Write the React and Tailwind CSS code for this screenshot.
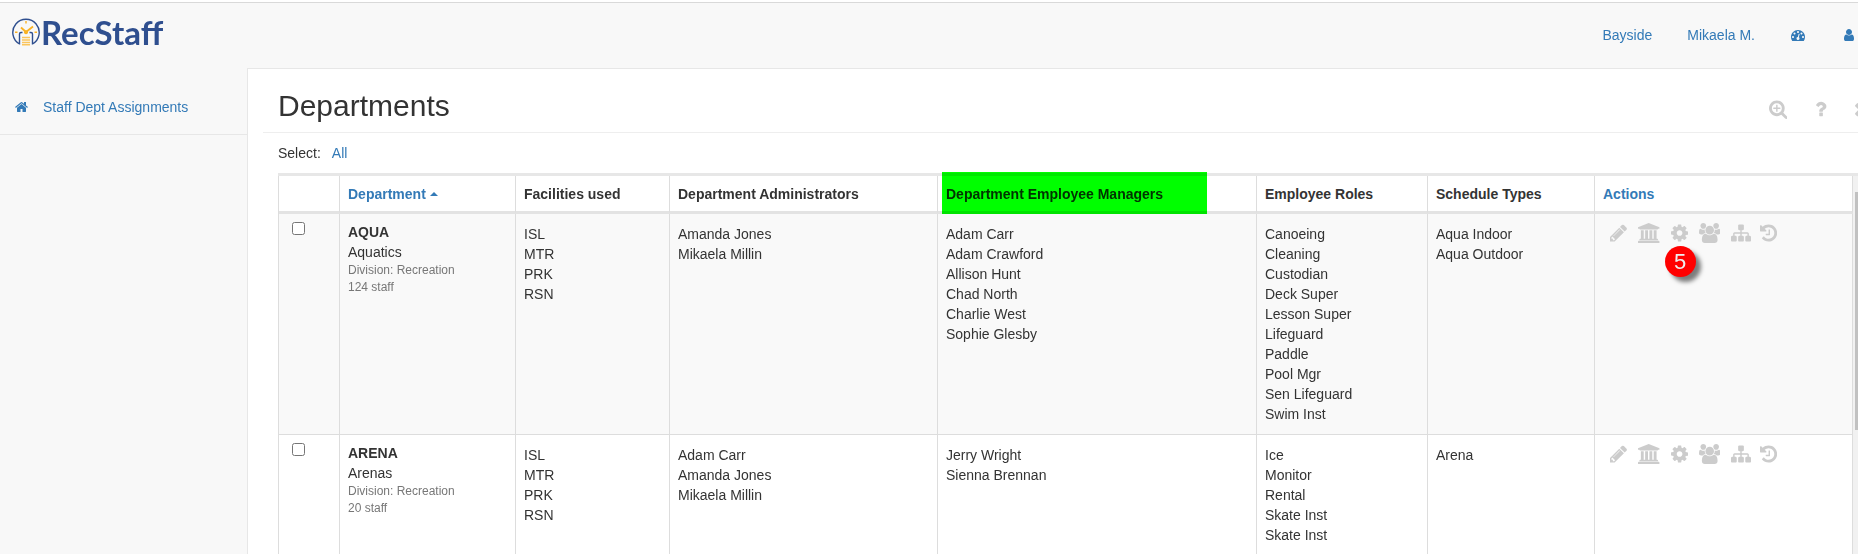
import React, { useState } from "react";

const ICONS = {
  home: {
    box: "64 0 1664 1792",
    d: "M1472 992v480q0 26-19 45t-45 19h-384v-384h-256v384h-384q-26 0-45-19t-19-45v-480q0-1 .5-3t.5-3l575-474 575 474q1 2 1 6zm223-69l-62 74q-8 9-21 11h-3q-13 0-21-7l-692-577-692 577q-12 8-24 7-13-2-21-11l-62-74q-8-10-7-23.5t11-21.5l719-599q32-26 76-26t76 26l244 204v-195q0-14 9-23t23-9h192q14 0 23 9t9 23v408l219 182q10 8 11 21.5t-7 23.5z",
  },
  dashboard: {
    box: "0 0 1792 1792",
    d: "M384 1152q0-53-37.5-90.5t-90.5-37.5-90.5 37.5-37.5 90.5 37.5 90.5 90.5 37.5 90.5-37.5 37.5-90.5zm192-448q0-53-37.5-90.5t-90.5-37.5-90.5 37.5-37.5 90.5 37.5 90.5 90.5 37.5 90.5-37.5 37.5-90.5zm428 481l101-382q6-26-7.5-48.5t-38.5-29.5-48 6.5-30 39.5l-101 382q-60 5-107 43.5t-63 98.5q-20 77 20 146t117 89 146-20 89-117q16-60-6-117t-72-91zm660-33q0-53-37.5-90.5t-90.5-37.5-90.5 37.5-37.5 90.5 37.5 90.5 90.5 37.5 90.5-37.5 37.5-90.5zm-640-640q0-53-37.5-90.5t-90.5-37.5-90.5 37.5-37.5 90.5 37.5 90.5 90.5 37.5 90.5-37.5 37.5-90.5zm448 192q0-53-37.5-90.5t-90.5-37.5-90.5 37.5-37.5 90.5 37.5 90.5 90.5 37.5 90.5-37.5 37.5-90.5zm320 448q0 261-141 483-19 29-54 29h-1402q-35 0-54-29-141-221-141-483 0-182 71-348t191-286 286-191 348-71 348 71 286 191 191 286 71 348z",
  },
  user: {
    box: "256 0 1280 1792",
    d: "M1536 1399q0 109-62.5 187t-150.5 78h-854q-88 0-150.5-78t-62.5-187q0-85 8.5-160.5t31.5-152 58.5-131 94-89 134.5-34.5q131 128 313 128t313-128q76 0 134.5 34.5t94 89 58.5 131 31.5 152 8.5 160.5zm-256-887q0 159-112.5 271.5t-271.5 112.5-271.5-112.5-112.5-271.5 112.5-271.5 271.5-112.5 271.5 112.5 112.5 271.5z",
  },
  zoomIn: {
    box: "64 0 1664 1792",
    d: "M1088 800v64q0 13-9.5 22.5t-22.5 9.5h-224v224q0 13-9.5 22.5t-22.5 9.5h-64q-13 0-22.5-9.5t-9.5-22.5v-224h-224q-13 0-22.5-9.5t-9.5-22.5v-64q0-13 9.5-22.5t22.5-9.5h224v-224q0-13 9.5-22.5t22.5-9.5h64q13 0 22.5 9.5t9.5 22.5v224h224q13 0 22.5 9.5t9.5 22.5zm128 32q0-185-131.5-316.5t-316.5-131.5-316.5 131.5-131.5 316.5 131.5 316.5 316.5 131.5 316.5-131.5 131.5-316.5zm512 832q0 53-37.5 90.5t-90.5 37.5q-54 0-90-38l-343-342q-179 124-399 124-143 0-273.5-55.5t-225-150-150-225-55.5-273.5 55.5-273.5 150-225 225-150 273.5-55.5 273.5 55.5 225 150 150 225 55.5 273.5q0 220-124 399l343 343q37 37 37 90z",
  },
  help: {
    box: "384 0 1024 1792",
    d: "M1088 1256v240q0 16-12 28t-28 12h-240q-16 0-28-12t-12-28v-240q0-16 12-28t28-12h240q16 0 28 12t12 28zm316-600q0 54-15.5 101t-35 76.5-55 59.5-57.5 43.5-61 35.5q-41 23-68.5 65t-27.5 67q0 17-12 32.5t-28 15.5h-240q-15 0-25.5-18.5t-10.5-37.5v-45q0-83 65-156.5t143-108.5q59-27 84-56t25-76q0-42-46.5-74t-107.5-32q-65 0-108 29-35 25-107 115-13 16-31 16-12 0-25-8l-164-125q-13-10-15.5-25t5.5-28q160-266 464-266 80 0 161 31t146 83 106 127.5 41 158.5z",
  },
  close: {
    box: "296 0 1200 1792",
    d: "M1490 1322q0 40-28 68l-136 136q-28 28-68 28t-68-28l-294-294-294 294q-28 28-68 28t-68-28l-136-136q-28-28-28-68t28-68l294-294-294-294q-28-28-28-68t28-68l136-136q28-28 68-28t68 28l294 294 294-294q28-28 68-28t68 28l136 136q28 28 28 68t-28 68l-294 294 294 294q28 28 28 68z",
  },
  pencil: {
    box: "128 0 1536 1792",
    d: "M491 1536l91-91-235-235-91 91v107h128v128h107zm523-928q0-22-22-22-10 0-17 7l-542 542q-7 7-7 17 0 22 22 22 10 0 17-7l542-542q7-7 7-17zm-54-192l416 416-832 832h-416v-416zm683 96q0 53-37 90l-166 166-416-416 166-165q36-38 90-38 53 0 91 38l235 234q37 39 37 91z",
  },
  university: {
    box: "0 0 1920 1792",
    d: "M960 0l960 384v128h-128q0 26-20.5 45t-48.5 19h-1526q-28 0-48.5-19t-20.5-45h-128v-128zm-704 640h256v768h128v-768h256v768h128v-768h256v768h128v-768h256v768h59q28 0 48.5 19t20.5 45v64h-1664v-64q0-26 20.5-45t48.5-19h59v-768zm1595 960q28 0 48.5 19t20.5 45v128h-1920v-128q0-26 20.5-45t48.5-19h1782z",
  },
  cog: {
    box: "128 0 1536 1792",
    d: "M1152 896q0-106-75-181t-181-75-181 75-75 181 75 181 181 75 181-75 75-181zm512-109v222q0 12-8 23t-20 13l-185 28q-19 54-39 91 35 50 107 138 10 12 10 25t-9 23q-27 37-99 108t-94 71q-12 0-26-9l-138-108q-44 23-91 38-16 136-29 186-7 28-36 28h-222q-14 0-24.5-8.5t-11.5-21.5l-28-184q-49-16-90-37l-141 107q-10 9-25 9-14 0-25-11-126-114-165-168-7-10-7-23 0-12 8-23 15-21 51-66.5t54-70.5q-27-50-41-99l-183-27q-13-2-21-12.5t-8-23.5v-222q0-12 8-23t19-13l186-28q14-46 39-92-40-57-107-138-10-12-10-24 0-10 9-23 26-36 98.5-107.5t94.5-71.5q13 0 26 10l138 107q44-23 91-38 16-136 29-186 7-28 36-28h222q14 0 24.5 8.5t11.5 21.5l28 184q49 16 90 37l142-107q9-9 24-9 13 0 25 10 129 119 165 170 7 8 7 22 0 12-8 23-15 21-51 66.5t-54 70.5q26 50 41 98l183 28q13 2 21 12.5t8 23.5z",
  },
  users: {
    box: "0 0 1920 1792",
    d: "M593 896q-162 5-265 128h-134q-82 0-138-40.5t-56-118.5q0-353 124-353 6 0 43.5 21t97.5 42.5 119 21.5q67 0 133-23-5 37-5 66 0 139 81 256zm1071 637q0 120-73 189.5t-194 69.5h-874q-121 0-194-69.5t-73-189.5q0-53 3.5-103.5t14-109 26.5-108.5 43-97.5 62-81 85.5-53.5 111.5-20q10 0 43 21.5t73 48 107 48 135 21.5 135-21.5 107-48 73-48 43-21.5q61 0 111.5 20t85.5 53.5 62 81 43 97.5 26.5 108.5 14 109 3.5 103.5zm-1024-1277q0 106-75 181t-181 75-181-75-75-181 75-181 181-75 181 75 75 181zm704 384q0 159-112.5 271.5t-271.5 112.5-271.5-112.5-112.5-271.5 112.5-271.5 271.5-112.5 271.5 112.5 112.5 271.5zm576 225q0 78-56 118.5t-138 40.5h-134q-103-123-265-128 81-117 81-256 0-29-5-66 66 23 133 23 59 0 119-21.5t97.5-42.5 43.5-21q124 0 124 353zm-128-609q0 106-75 181t-181 75-181-75-75-181 75-181 181-75 181 75 75 181z",
  },
  sitemap: {
    box: "0 0 1792 1792",
    d: "M1792 1248v320q0 40-28 68t-68 28h-320q-40 0-68-28t-28-68v-320q0-40 28-68t68-28h96v-192h-512v192h96q40 0 68 28t28 68v320q0 40-28 68t-68 28h-320q-40 0-68-28t-28-68v-320q0-40 28-68t68-28h96v-192h-512v192h96q40 0 68 28t28 68v320q0 40-28 68t-68 28h-320q-40 0-68-28t-28-68v-320q0-40 28-68t68-28h96v-192q0-52 38-90t90-38h512v-192h-96q-40 0-68-28t-28-68v-320q0-40 28-68t68-28h320q40 0 68 28t28 68v320q0 40-28 68t-68 28h-96v192h512q52 0 90 38t38 90v192h96q40 0 68 28t28 68z",
  },
  history: {
    box: "128 0 1536 1792",
    d: "M1664 896q0 156-61 298t-164 245-245 164-298 61q-172 0-327-72.5t-264-204.5q-7-10-6.5-22.5t8.5-20.5l137-138q10-9 25-9 16 2 23 12 73 95 179 147t225 52q104 0 198.5-40.5t163.5-109.5 109.5-163.5 40.5-198.5-40.5-198.5-109.5-163.5-163.5-109.5-198.5-40.5q-98 0-188 35.5t-160 101.5l137 138q31 30 14 69-17 40-59 40h-448q-26 0-45-19t-19-45v-448q0-42 40-59 39-17 69 14l130 129q107-101 244.5-156.5t284.5-55.5q156 0 298 61t245 164 164 245 61 298zm-640-288v448q0 14-9 23t-23 9h-320q-14 0-23-9t-9-23v-64q0-14 9-23t23-9h224v-352q0-14 9-23t23-9h64q14 0 23 9t9 23z",
  },
};

const ACTIONS = [
  { icon: "pencil", label: "Edit" },
  { icon: "university", label: "Facilities", wide: true },
  { icon: "cog", label: "Settings" },
  { icon: "users", label: "Staff", wide: true },
  { icon: "sitemap", label: "Structure" },
  { icon: "history", label: "History" },
];

const DEPARTMENTS = [
  {
    code: "AQUA",
    name: "Aquatics",
    division: "Recreation",
    staff: 124,
    facilities: ["ISL", "MTR", "PRK", "RSN"],
    admins: ["Amanda Jones", "Mikaela Millin"],
    managers: [
      "Adam Carr",
      "Adam Crawford",
      "Allison Hunt",
      "Chad North",
      "Charlie West",
      "Sophie Glesby",
    ],
    roles: [
      "Canoeing",
      "Cleaning",
      "Custodian",
      "Deck Super",
      "Lesson Super",
      "Lifeguard",
      "Paddle",
      "Pool Mgr",
      "Sen Lifeguard",
      "Swim Inst",
    ],
    schedules: ["Aqua Indoor", "Aqua Outdoor"],
    step: 5,
  },
  {
    code: "ARENA",
    name: "Arenas",
    division: "Recreation",
    staff: 20,
    facilities: ["ISL", "MTR", "PRK", "RSN"],
    admins: ["Adam Carr", "Amanda Jones", "Mikaela Millin"],
    managers: ["Jerry Wright", "Sienna Brennan"],
    roles: ["Ice", "Monitor", "Rental", "Skate Inst", "Skate Inst"],
    schedules: ["Arena"],
  },
];

function Icon({ name, className }) {
  return (
    <svg viewBox={ICONS[name].box} className={className} fill="currentColor" aria-hidden="true">
      <path d={ICONS[name].d} />
    </svg>
  );
}

function Logo() {
  return (
    <a href="#home" className="flex items-center gap-px text-[#2f4f8f]">
      <svg viewBox="0 0 28 28" className="h-7 w-7" fill="none" aria-hidden="true">
        <path
          d="M7.5 26.5V16q0-1.5 1.5-1.5h1.5M20.5 26.5V16q0-1.5-1.5-1.5H17.5M7.5 26A13.2 13.2 0 1 1 20.5 26"
          stroke="#2f4f8f"
          strokeWidth="1.4"
        />
        <path d="M9 9.5l5 4.5 7-5.5" stroke="#f9b224" strokeWidth="1.8" />
        <circle cx="14" cy="14.3" r="2" fill="#f9b224" />
        <path d="M14 3v2.5M3 14.3h2.5M22.5 14.3H25" stroke="#f9b224" strokeWidth="1.4" />
        <path d="M10 19.5h8M10 22h8M10 24.5h8M10 26.7h8" stroke="#fbc55c" strokeWidth="1.5" />
      </svg>
      <span className="font-['Lato',sans-serif] text-[33px] leading-8 font-bold">RecStaff</span>
    </a>
  );
}

function TextList({ items }) {
  return (
    <td className="border-r border-b border-[#ddd] px-2 py-[10px] align-top">
      <ul>
        {items.map((item, i) => (
          <li key={i}>{item}</li>
        ))}
      </ul>
    </td>
  );
}

function HeaderCell({ children, className = "" }) {
  return (
    <th
      scope="col"
      className={`relative border-r border-b-[3px] border-r-[#ddd] border-b-[#e3e3e3] bg-white px-2 pt-2 pb-[7px] text-left font-bold ${className}`}
    >
      {children}
    </th>
  );
}

function DepartmentRow({ dept, checked, onToggle }) {
  return (
    <tr className="odd:bg-[#f9f9f9]">
      <td className="border-r border-b border-[#ddd] px-[13px] pt-2 align-top">
        <input
          type="checkbox"
          aria-label={`Select ${dept.code}`}
          checked={checked}
          onChange={onToggle}
          className="block h-[13px] w-[13px]"
        />
      </td>
      <td className="border-r border-b border-[#ddd] p-2 align-top">
        <div className="font-bold">{dept.code}</div>
        <div>{dept.name}</div>
        <div className="text-xs leading-[17px] text-[#777]">Division: {dept.division}</div>
        <div className="text-xs leading-[17px] text-[#777]">{dept.staff} staff</div>
      </td>
      <TextList items={dept.facilities} />
      <TextList items={dept.admins} />
      <TextList items={dept.managers} />
      <TextList items={dept.roles} />
      <TextList items={dept.schedules} />
      <td className="border-r border-b border-[#ddd] py-[9px] pl-[15px] align-top text-[#ccc]">
        <div className="flex gap-[9px]">
          {ACTIONS.map((action) => (
            <button
              key={action.icon}
              type="button"
              aria-label={action.label}
              className={action.wide ? "relative px-0.5" : "relative"}
            >
              <Icon name={action.icon} className="h-5" />
              {dept.step && action.icon === "cog" && (
                <span className="absolute top-[23px] -left-1.5 flex h-[31px] w-[31px] items-center justify-center rounded-full bg-[#f00] text-[22px] text-[#eee] shadow-[5px_5px_4px_rgba(0,0,0,0.5)]">
                  {dept.step}
                </span>
              )}
            </button>
          ))}
        </div>
      </td>
    </tr>
  );
}

export default function App() {
  const [selected, setSelected] = useState([]);

  const toggle = (code) => {
    setSelected(
      selected.includes(code) ? selected.filter((c) => c !== code) : [...selected, code]
    );
  };

  return (
    <div className="flex h-screen flex-col overflow-hidden bg-[#f8f8f8] font-['Liberation_Sans',Arial,sans-serif] text-sm text-[#333]">
      <div className="h-0.5 shrink-0 bg-white" />
      <header className="flex h-[66px] shrink-0 items-start justify-between border-t border-[#d9d9d9] pt-[13px] pr-px pl-3">
        <Logo />
        <nav className="flex items-center gap-[35px] pt-[9px] text-[#337ab7]">
          <a href="#site">Bayside</a>
          <a href="#profile">Mikaela M.</a>
          <a href="#dashboard" aria-label="Dashboard" className="flex w-4 justify-center">
            <Icon name="dashboard" className="h-3.5" />
          </a>
          <a href="#account" aria-label="Account" className="flex w-4 justify-center">
            <Icon name="user" className="h-3.5" />
          </a>
        </nav>
      </header>

      <div className="flex min-h-0 flex-1">
        <aside className="w-[247px] shrink-0">
          <a
            href="#assignments"
            className="flex items-center gap-[15px] border-b border-[#e7e7e7] pt-[29px] pb-[17px] pl-[15px] text-[#337ab7]"
          >
            <Icon name="home" className="h-3.5" />
            Staff Dept Assignments
          </a>
        </aside>

        <main className="flex min-w-0 flex-1 flex-col overflow-hidden border-t border-l border-[#e7e7e7] bg-white">
          <div className="ml-[15px] flex justify-between overflow-hidden border-b border-[#eee] pt-5 pb-2.5 pl-[15px]">
            <h1 className="text-[30px] leading-[33px]">Departments</h1>
            <div className="-mr-2.5 flex items-center gap-7 pt-1.5 text-[#ccc]">
              <button type="button" aria-label="Search">
                <Icon name="zoomIn" className="h-5" />
              </button>
              <button type="button" aria-label="Help">
                <Icon name="help" className="h-5" />
              </button>
              <button type="button" aria-label="Close">
                <Icon name="close" className="h-5" />
              </button>
            </div>
          </div>

          <div className="flex gap-[11px] py-2.5 pl-[30px]">
            <span>Select:</span>
            <a href="#all" className="text-[#337ab7]" onClick={() => setSelected(DEPARTMENTS.map((d) => d.code))}>
              All
            </a>
          </div>

          <div className="ml-[30px] flex min-h-0 flex-1 border-t-[3px] border-[#e7e7e7]">
            <div className="min-w-0 flex-1">
              <table className="w-full table-fixed border-separate border-spacing-0 border-l border-[#ddd]">
                <colgroup>
                  <col className="w-[61px]" />
                  <col className="w-[176px]" />
                  <col className="w-[154px]" />
                  <col className="w-[268px]" />
                  <col className="w-[319px]" />
                  <col className="w-[171px]" />
                  <col className="w-[167px]" />
                  <col />
                </colgroup>
                <thead>
                  <tr>
                    <HeaderCell />
                    <HeaderCell className="text-[#337ab7]">
                      <a href="#sort" className="flex items-center gap-1">
                        Department
                        <svg viewBox="0 0 8 4" className="h-1 w-2" fill="currentColor" aria-hidden="true">
                          <path d="M0 4L4 0l4 4z" />
                        </svg>
                      </a>
                    </HeaderCell>
                    <HeaderCell>Facilities used</HeaderCell>
                    <HeaderCell>Department Administrators</HeaderCell>
                    <HeaderCell>
                      Department Employee Managers
                      <span className="absolute -top-1 left-1 h-[42px] w-[265px] bg-[#0f0] mix-blend-multiply" />
                    </HeaderCell>
                    <HeaderCell>Employee Roles</HeaderCell>
                    <HeaderCell>Schedule Types</HeaderCell>
                    <HeaderCell className="text-[#337ab7]">Actions</HeaderCell>
                  </tr>
                </thead>
                <tbody>
                  {DEPARTMENTS.map((dept) => (
                    <DepartmentRow
                      key={dept.code}
                      dept={dept}
                      checked={selected.includes(dept.code)}
                      onToggle={() => toggle(dept.code)}
                    />
                  ))}
                </tbody>
              </table>
            </div>
            <div className="w-[5px] bg-[#f1f1f1] pt-4 pl-0.5">
              <div className="h-[238px] bg-[#c1c1c1]" />
            </div>
          </div>
        </main>
      </div>
    </div>
  );
}
